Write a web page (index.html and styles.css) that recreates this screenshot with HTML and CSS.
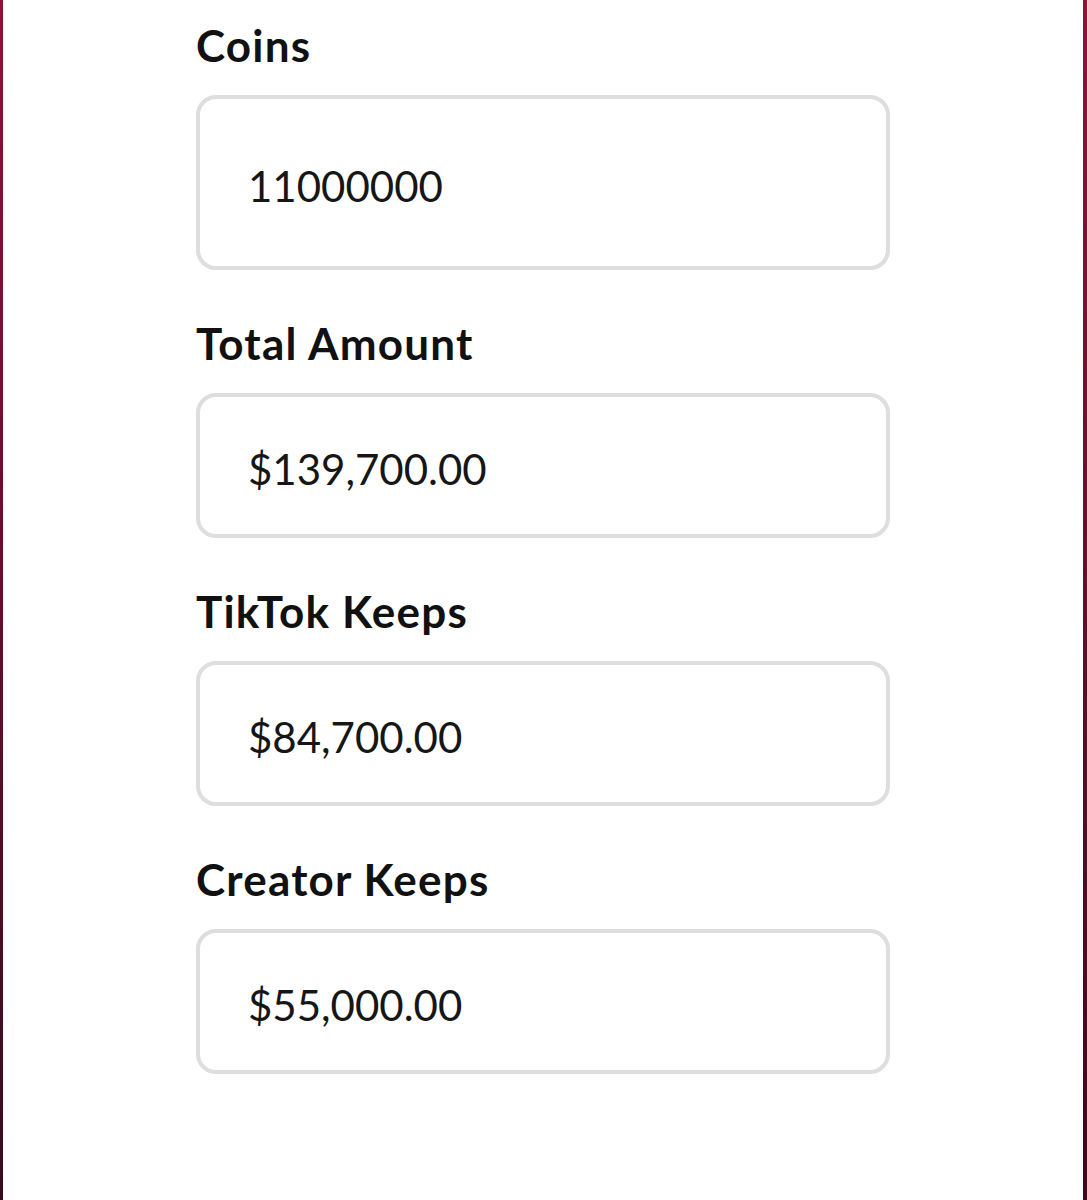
FILE: index.html
```html
<!DOCTYPE html>
<html lang="en">
<head>
  <meta charset="UTF-8" />
  <meta name="viewport" content="width=device-width, initial-scale=1.0"/>
  <title>TikTok Coins Calculator</title>
  <link rel="stylesheet" href="styles.css">
</head>
<body>
  <div class="frame">
    <div class="form">
      <div class="field">
        <label for="coins">Coins</label>
        <input type="text" id="coins" class="box tall" value="11000000">
      </div>

      <div class="field">
        <label for="total">Total Amount</label>
        <input type="text" id="total" class="box" value="$139,700.00" readonly>
      </div>

      <div class="field">
        <label for="tiktok">TikTok Keeps</label>
        <input type="text" id="tiktok" class="box" value="$84,700.00" readonly>
      </div>

      <div class="field">
        <label for="creator">Creator Keeps</label>
        <input type="text" id="creator" class="box" value="$55,000.00" readonly>
      </div>
    </div>
  </div>
</body>
</html>
```

FILE: styles.css
```css
body {
  margin: 0;
  background: #fff;
  font-family: Lato, "Open Sans", sans-serif;
}
.frame {
  min-height: 1200px;
  box-sizing: border-box;
  border-left: 3px solid #6e1232;
  border-right: 4px solid #a8173f;
  border-image: linear-gradient(#8a1538, #3a0a1e) 1;
  background: #fff;
}
.form {
  width: 694px;
  margin-left: 193px;
  padding-top: 20px;
}
.field {
  margin-bottom: 48px;
}
label {
  display: block;
  font-size: 44px;
  font-weight: bold;
  line-height: 50px;
  letter-spacing: 1.2px;
  color: #111;
  margin-bottom: 25px;
}
.box {
  display: block;
  width: 100%;
  height: 145px;
  box-sizing: border-box;
  padding: 6px 0 0 48px;
  border: 4px solid #dedede;
  border-radius: 20px;
  font-family: Lato, "Open Sans", sans-serif;
  font-size: 42px;
  color: #161616;
  background: #fff;
  outline: none;
}
.box.tall {
  height: 175px;
}
```
